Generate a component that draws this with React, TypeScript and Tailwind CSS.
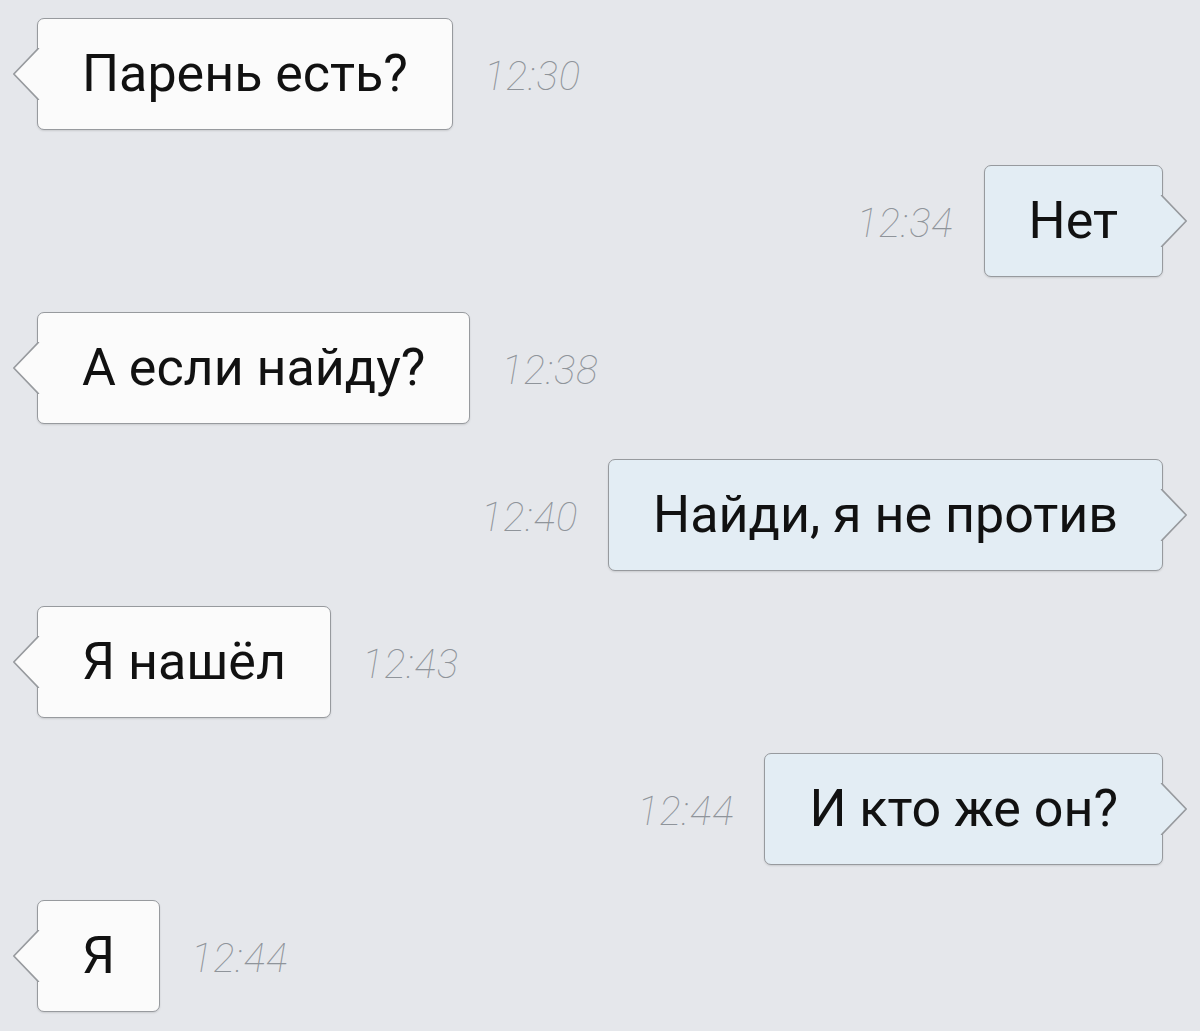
const messages = [
  { text: "Парень есть?", time: "12:30", mine: false },
  { text: "Нет", time: "12:34", mine: true },
  { text: "А если найду?", time: "12:38", mine: false },
  { text: "Найди, я не против", time: "12:40", mine: true },
  { text: "Я нашёл", time: "12:43", mine: false },
  { text: "И кто же он?", time: "12:44", mine: true },
  { text: "Я", time: "12:44", mine: false },
];

function Tail({ mine }: { mine: boolean }) {
  const fill = mine ? "#e3edf4" : "#fbfbfb";
  return (
    <svg
      width="28"
      height="52"
      viewBox="0 0 28 52"
      className={
        mine
          ? "absolute right-[-26px] top-1/2 -translate-y-1/2 -scale-x-100"
          : "absolute left-[-26px] top-1/2 -translate-y-1/2"
      }
    >
      <polygon points="28.5,-1 1,26 28.5,53" fill={fill} />
      <polyline
        points="26.8,0 1.8,26 26.8,52"
        fill="none"
        stroke="#979a9e"
        strokeWidth="1.7"
        strokeLinejoin="round"
      />
    </svg>
  );
}

function Bubble({ text, time, mine }: { text: string; time: string; mine: boolean }) {
  const stamp = (
    <span className="text-[40px] italic font-thin tracking-[1px] text-[#8f949a] font-['Roboto',sans-serif] translate-y-[3px]">
      {time}
    </span>
  );
  return (
    <div className={mine ? "flex items-center justify-end gap-[30px]" : "flex items-center gap-[31px]"}>
      {mine && stamp}
      <div
        className={
          "relative h-[112px] flex items-center px-[44px] rounded-[7px] border-[1.7px] border-[#979a9e] shadow-[0_1px_2px_rgba(0,0,0,0.12)] " +
          (mine ? "bg-[#e3edf4]" : "bg-[#fbfbfb]")
        }
      >
        <Tail mine={mine} />
        <span className="text-[52px] leading-none text-[#111111] font-['Roboto',sans-serif]">
          {text}
        </span>
      </div>
      {!mine && stamp}
    </div>
  );
}

export default function App() {
  return (
    <div className="w-[1200px] h-[1031px] bg-[#e5e7eb] overflow-hidden px-[37px] pt-[18px] flex flex-col gap-[35px]">
      {messages.map((m, i) => (
        <Bubble key={i} {...m} />
      ))}
    </div>
  );
}
